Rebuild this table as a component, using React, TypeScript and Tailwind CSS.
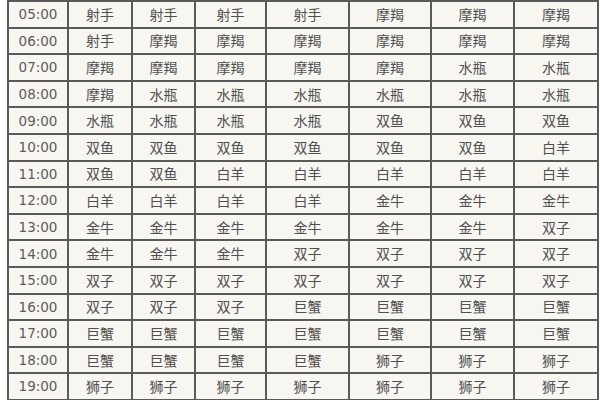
import React from "react";

const rows: [string, string[]][] = [
  ["05:00", ["射手", "射手", "射手", "射手", "摩羯", "摩羯", "摩羯"]],
  ["06:00", ["射手", "摩羯", "摩羯", "摩羯", "摩羯", "摩羯", "摩羯"]],
  ["07:00", ["摩羯", "摩羯", "摩羯", "摩羯", "摩羯", "水瓶", "水瓶"]],
  ["08:00", ["摩羯", "水瓶", "水瓶", "水瓶", "水瓶", "水瓶", "水瓶"]],
  ["09:00", ["水瓶", "水瓶", "水瓶", "水瓶", "双鱼", "双鱼", "双鱼"]],
  ["10:00", ["双鱼", "双鱼", "双鱼", "双鱼", "双鱼", "双鱼", "白羊"]],
  ["11:00", ["双鱼", "双鱼", "白羊", "白羊", "白羊", "白羊", "白羊"]],
  ["12:00", ["白羊", "白羊", "白羊", "白羊", "金牛", "金牛", "金牛"]],
  ["13:00", ["金牛", "金牛", "金牛", "金牛", "金牛", "金牛", "双子"]],
  ["14:00", ["金牛", "金牛", "金牛", "双子", "双子", "双子", "双子"]],
  ["15:00", ["双子", "双子", "双子", "双子", "双子", "双子", "双子"]],
  ["16:00", ["双子", "双子", "双子", "巨蟹", "巨蟹", "巨蟹", "巨蟹"]],
  ["17:00", ["巨蟹", "巨蟹", "巨蟹", "巨蟹", "巨蟹", "巨蟹", "巨蟹"]],
  ["18:00", ["巨蟹", "巨蟹", "巨蟹", "巨蟹", "狮子", "狮子", "狮子"]],
  ["19:00", ["狮子", "狮子", "狮子", "狮子", "狮子", "狮子", "狮子"]],
];

export default function App() {
  return (
    <div className="w-[600px] h-[400px] overflow-hidden bg-white">
      <div className="ml-[7px] w-[592px] grid grid-cols-[58px_62px_61px_69px_81px_80px_81px_82px] auto-rows-[24.6px] gap-[2px] p-[2px] bg-[#5a5a5a]">
        {rows.map(([t, cells]) => (
          <React.Fragment key={t}>
            <div className="bg-[#f7f6f1] flex items-center justify-center text-[13.5px] text-[#5c5c5c] font-['DejaVu_Sans',sans-serif]">
              {t}
            </div>
            {cells.map((c, i) => (
              <div
                key={i}
                className="bg-[#f7f6f1] flex items-center justify-center text-[14px] text-[#505050] font-['Noto_Sans_CJK_SC',sans-serif]"
              >
                {c}
              </div>
            ))}
          </React.Fragment>
        ))}
      </div>
    </div>
  );
}
